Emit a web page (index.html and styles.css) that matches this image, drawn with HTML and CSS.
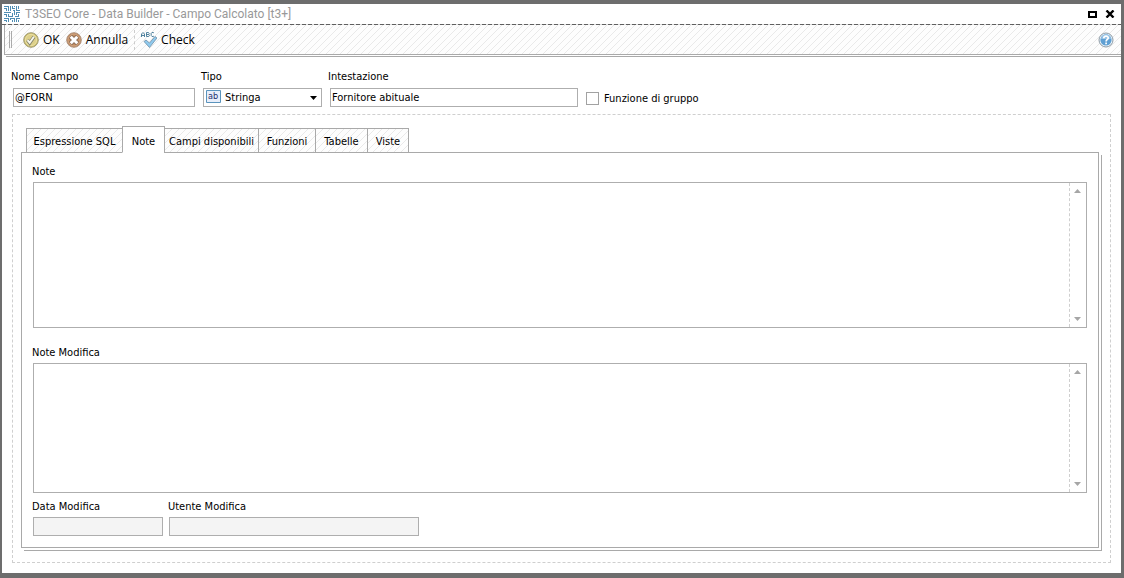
FILE: index.html
```html
<!DOCTYPE html>
<html lang="it">
<head>
<meta charset="utf-8">
<title>T3SEO Core - Data Builder</title>
<link rel="stylesheet" href="styles.css">
</head>
<body>
<div class="window">
  <header class="titlebar">
    <svg class="logo" width="16" height="16" viewBox="0 0 16 16" shape-rendering="crispEdges" fill="none" stroke="#4f8db3">
      <path d="M0 .5h4.500v4M0 2.500h2.500v2M6.500 0v4.500M8.500 0v2.500h2.500M10.500 0v1M12.500 0v4.500h3M14.500 0v2.500M0 6.500h6.500M8.500 4.500h2v4M0 8.500h2.500v2M4.500 8v2.500h4v-4M12.500 6.500h3.500M12.500 6v2.500M14.500 8v2.500h-4M0 12.500h4.500v3.500M6.500 12.500h4v3M6.500 12v2M12.500 12.500h3.500M12.500 12v3.500M0 14.500h2.500v1.500M8.500 14v2M14.500 14v2"/>
    </svg>
    <h1 class="caption">T3SEO Core - Data Builder - Campo Calcolato [t3+]</h1>
    <button class="winbtn" aria-label="Ingrandisci"><svg width="9" height="7" viewBox="0 0 9 7" shape-rendering="crispEdges"><path d="M1 1h7v5H1z" fill="none" stroke="#000" stroke-width="2"/></svg></button>
    <button class="winbtn" aria-label="Chiudi"><svg width="10" height="8" viewBox="0 0 10 8"><path d="M1.500.5l7 7M8.500.5l-7 7" stroke="#000" stroke-width="2.400"/></svg></button>
  </header>

  <div class="toolbar hatch" role="toolbar">
    <span class="grip"></span>
    <button class="tool">
      <svg width="16" height="16" viewBox="0 0 16 16"><circle cx="8" cy="8" r="7.300" fill="#cdbd68" stroke="#a09c78"/><circle cx="8" cy="8" r="5.700" fill="#ddd08a" stroke="#f0e9b8" stroke-width=".7"/><path d="M4.500 8l2.200 3L11 4.700" fill="none" stroke="#85856f" stroke-width="3.400"/><path d="M4.500 8.100l2.200 2.600 4.200-5.900" fill="none" stroke="#f7f7ee" stroke-width="1.900"/></svg>
      OK
    </button>
    <button class="tool">
      <svg width="16" height="16" viewBox="0 0 16 16"><circle cx="8" cy="8" r="7.300" fill="#b98358" stroke="#b09480"/><circle cx="8" cy="8" r="6" fill="#c18c60" stroke="#d8b291" stroke-width=".7"/><path d="M4.500 4.500l7 7M11.500 4.500l-7 7" stroke="#806554" stroke-width="4.500"/><path d="M4.700 4.700l6.600 6.600M11.300 4.700l-6.600 6.600" stroke="#fff" stroke-width="3"/></svg>
      Annulla
    </button>
    <span class="divider"></span>
    <button class="tool">
      <svg width="16" height="16" viewBox="0 0 16 16"><path d="M3 9.500l2-1.500 3.500 3L14 4.500l2 1.500-7.500 9.500z" fill="#8fcaee" stroke="#6d8da4" stroke-width=".8"/><g fill="none" stroke="#3f7695" stroke-width=".9"><path d="M.5 5V2L2 .5 3.500 2v3M.5 3.500h3M5.500.5v4h2.200l.8-1-.8-1H5.500M5.500.5h2l.7 1-.7 1M13 1l-.8-.5H11l-.8 1v2l.8 1h1.200L13 4"/></g></svg>
      Check
    </button>
    <button class="tool help" aria-label="Guida">
      <svg width="16" height="16" viewBox="0 0 16 16"><circle cx="8" cy="8" r="7" fill="#eef5fa" stroke="#8c9aa5"/><circle cx="8" cy="8" r="5.600" fill="#5f9fd3"/><path d="M3 7a5 5 0 0110 0z" fill="#93c0e4"/><path d="M5.800 6.300c0-3 4.600-2.800 4.400-.2C10 7.500 8.200 7.600 8.100 9.500M8.100 10.500v1.700" fill="none" stroke="#fff" stroke-width="1.700"/></svg>
    </button>
  </div>

  <main class="form">
    <div class="fields">
      <div class="field nome"><label for="nome">Nome Campo</label><input id="nome" class="box" type="text" value="@FORN"></div>
      <div class="field tipo"><label for="tipo">Tipo</label>
        <div class="combo">
          <svg class="type" width="15" height="13" viewBox="0 0 15 13"><path d="M.5.5h14v12H.5z" fill="#e8eefa" stroke="#5a94bd"/><text class="typetext" x="7" y="9" text-anchor="middle">ab</text></svg>
          <select id="tipo" class="box"><option>Stringa</option></select>
          <svg class="arrow" width="7" height="4" viewBox="0 0 7 4"><path d="M0 0h7L3.500 4z"/></svg>
        </div>
      </div>
      <div class="field intest"><label for="intest">Intestazione</label><input id="intest" class="box" type="text" value="Fornitore abituale"></div>
      <label class="check"><input type="checkbox">Funzione di gruppo</label>
    </div>

    <section class="group">
      <div class="tabs" role="tablist">
        <button class="tab hatch w-sql" role="tab">Espressione SQL</button>
        <button class="tab active w-note" role="tab" aria-selected="true">Note</button>
        <button class="tab hatch w-campi" role="tab">Campi disponibili</button>
        <button class="tab hatch w-funz" role="tab">Funzioni</button>
        <button class="tab hatch w-tab" role="tab">Tabelle</button>
        <button class="tab hatch w-viste" role="tab">Viste</button>
      </div>
      <div class="panel" role="tabpanel">
        <label class="arealabel" for="note">Note</label>
        <div class="area first">
          <textarea id="note"></textarea>
          <div class="scroll"><svg width="7" height="4" viewBox="0 0 7 4"><path d="M0 4h7L3.500 0z"/></svg><svg width="7" height="4" viewBox="0 0 7 4"><path d="M0 0h7L3.500 4z"/></svg></div>
        </div>
        <label class="arealabel" for="notemod">Note Modifica</label>
        <div class="area second">
          <textarea id="notemod"></textarea>
          <div class="scroll"><svg width="7" height="4" viewBox="0 0 7 4"><path d="M0 4h7L3.500 0z"/></svg><svg width="7" height="4" viewBox="0 0 7 4"><path d="M0 0h7L3.500 4z"/></svg></div>
        </div>
        <div class="meta">
          <div class="field data"><label for="data">Data Modifica</label><input id="data" class="box" type="text" readonly></div>
          <div class="field utente"><label for="utente">Utente Modifica</label><input id="utente" class="box" type="text" readonly></div>
        </div>
      </div>
    </section>
  </main>
</div>
</body>
</html>
```

FILE: styles.css
```css
* { box-sizing: border-box; }
body {
  margin: 0;
  font: 11px/14px "DejaVu Sans Condensed", Tahoma, sans-serif;
  color: #000;
}
button, input, select, textarea { font: inherit; color: inherit; margin: 0; border-radius: 0; }
svg { display: block; flex: none; }

.window {
  display: flex;
  flex-direction: column;
  min-height: 100vh;
  overflow: hidden;
  border: solid #6d6d6d;
  border-width: 4px 3px 5px 2px;
  background: #fff;
}

.titlebar {
  display: flex;
  align-items: center;
  gap: 5px;
  height: 21px;
  padding: 0 6px 1px 2px;
  background: repeating-linear-gradient(90deg, #5f5f5f 0 4px, #ddd 4px 6px) bottom / 100% 1px no-repeat;
}
.caption {
  flex: 1;
  margin: 0;
  font: 12px/18px Roboto, "Segoe UI", sans-serif;
  color: #999;
}
.winbtn { padding: 0; border: 0; background: none; }
.winbtn + .winbtn { margin-left: 3px; }

.hatch {
  background: #fdfdfd linear-gradient(135deg, transparent 45%, #e9e9e9 45% 55%, transparent 55%) 0 0 / 7px 7px;
}

.toolbar {
  display: flex;
  align-items: center;
  gap: 6px;
  height: 30px;
  margin-left: 2px;
  padding: 0 7px 0 4px;
  border: solid #a9a9a9;
  border-width: 0 0 1px 1px;
  box-shadow: 2px 1px 0 #fff, 2px 2px 0 #a9a9a9;
}
.grip { width: 3px; height: 17px; margin-right: 5px; border: solid #aaa; border-width: 0 1px; }
.tool {
  display: flex;
  align-items: center;
  gap: 4px;
  padding: 0;
  border: 0;
  background: none;
  font: 12px/18px "Open Sans", "Segoe UI", sans-serif;
}
.divider { height: 20px; border-left: 1px dashed #ccc; }
.help { margin-left: auto; }

.form { flex: 1; display: flex; flex-direction: column; padding: 15px 10px 10px; }
.fields { display: flex; align-items: flex-end; gap: 8px; padding: 0 1px; margin-bottom: 7px; }
.field { display: flex; flex-direction: column; gap: 4px; }
.field label { margin-left: -2px; white-space: nowrap; }
.arealabel { margin-left: -1px; margin-bottom: 3px; }
.box { width: 100%; height: 19px; padding: 0 1px; border: 1px solid #aeaeae; background: #fff; outline: 0; }
.box:read-only:not(select) { background: #f4f4f4; }
.nome { width: 182px; }
.tipo { width: 119px; }
.intest { width: 248px; }
.combo { position: relative; }
.combo select { display: block; appearance: none; padding-left: 21px; }
.type { position: absolute; left: 3px; top: 2px; pointer-events: none; }
.typetext { font: 9px "DejaVu Sans Condensed", sans-serif; fill: #1f2f70; }
.arrow { position: absolute; right: 5px; top: 8px; pointer-events: none; }
.check { display: flex; align-items: center; gap: 5px; height: 17px; }
.check input { appearance: none; width: 13px; height: 13px; border: 1px solid #a2a2a2; background: #fff; }

.group {
  flex: 1;
  display: flex;
  flex-direction: column;
  padding: 11px 11px 14px 8px;
  border: 1px dashed #cfcfcf;
}
.tabs { display: flex; align-items: flex-end; padding-left: 5px; margin-bottom: -1px; position: relative; }
.tab {
  height: 25px;
  padding: 2px 0 0;
  border: 1px solid #a9a9a9;
  margin-right: -1px;
  white-space: nowrap;
}
.tab.active { height: 27px; padding-top: 4px; border-bottom-color: #fff; background: #fff; }
.w-sql { width: 97px; }
.w-note { width: 43px; }
.w-campi { width: 95px; }
.w-funz { width: 58px; }
.w-tab { width: 53px; }
.w-viste { width: 42px; }

.panel {
  flex: 1;
  display: flex;
  flex-direction: column;
  padding: 12px 11px 11px;
  border: 1px solid #a9a9a9;
  background: #fff;
  box-shadow: 2px 2px 0 #fff, 3px 3px 0 #a9a9a9;
}
.area { display: flex; border: 1px solid #aeaeae; }
.area.first { flex: 146 0 0; margin-bottom: 18px; }
.area.second { flex: 130 0 0; margin-bottom: 7px; }
.area textarea { flex: 1; min-width: 0; padding: 1px; border: 0; resize: none; outline: 0; background: none; }
.scroll {
  display: flex;
  flex-direction: column;
  align-items: center;
  justify-content: space-between;
  width: 17px;
  padding: 6px 1px 6px 0;
  border-left: 1px dashed #cfcfcf;
  fill: #a6a6a6;
}
.meta { display: flex; gap: 6px; }
.meta .field { gap: 3px; }
.meta label { margin-left: -1px; }
.data { width: 130px; }
.utente { width: 250px; }
```
